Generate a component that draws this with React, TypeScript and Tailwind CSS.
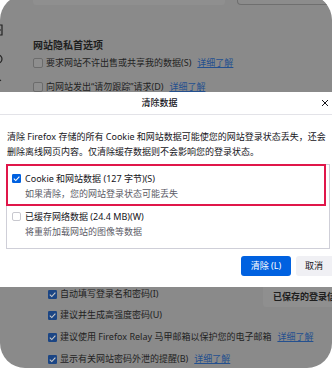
import type { ReactNode } from 'react'

const font = { fontFamily: '"Noto Sans", "Noto Sans CJK SC", sans-serif' }

function Check({ size = 9, dim = false }: { size?: number; dim?: boolean }) {
  return (
    <svg width={size} height={size} viewBox="0 0 10 10" className="shrink-0">
      <rect x="0" y="0" width="10" height="10" rx="1.5" fill={dim ? '#1b4584' : '#0061e0'} />
      <path d="M2 5.2 L4.2 7.3 L8.2 2.8" fill="none" stroke={dim ? '#c9c9c9' : '#fff'} strokeWidth="1.2" />
    </svg>
  )
}

function Empty({ dim = false }: { dim?: boolean }) {
  return (
    <span
      className={
        dim
          ? 'h-[10px] w-[10px] shrink-0 rounded-[2px] border border-[#6c6c6c] bg-[#8e8e8e]'
          : 'h-[9px] w-[9px] shrink-0 rounded-[2px] border border-[#c8c8cf] bg-white'
      }
    />
  )
}

function Link({ children }: { children: ReactNode }) {
  return <span className="ml-[6px] text-[#24508f] underline">{children}</span>
}

function PageRow({ children, checked }: { children: ReactNode; checked?: boolean }) {
  return (
    <div className="flex h-[14px] items-center gap-[3px] text-[9px] leading-[14px] text-[#222]">
      {checked ? <Check size={9} dim /> : <Empty dim />}
      <span className="whitespace-nowrap">{children}</span>
    </div>
  )
}

function Option({
  title,
  note,
  checked,
}: {
  title: string
  note: string
  checked?: boolean
}) {
  return (
    <div className="flex gap-[4px]">
      <div className="flex h-[15px] items-center">{checked ? <Check /> : <Empty />}</div>
      <div className="text-[9px] leading-[15px] whitespace-nowrap">
        <div className="text-[#15141a]">{title}</div>
        <div className="text-[#5b5b66]">{note}</div>
      </div>
    </div>
  )
}

export default function App() {
  return (
    <div className="h-[368px] w-[332px] overflow-hidden bg-white" style={font}>
      <div className="-mt-[5px] flex h-[373px] flex-col overflow-hidden rounded-[25px] bg-[#8a8a8a]">
        {/* page behind the dialog */}
        <div className="flex h-[97px] shrink-0 overflow-hidden">
          <div className="flex w-[33px] shrink-0 flex-col">
            <svg width="10" height="12" viewBox="0 0 10 12" className="mt-[29px] -ml-[6px]">
              <path d="M1 1 H8 V11 H1" fill="none" stroke="#222" strokeWidth="1.2" />
              <path d="M1 6 H7" stroke="#222" strokeWidth="1.2" />
            </svg>
            <svg width="10" height="10" viewBox="0 0 10 10" className="mt-[18px] -ml-[6px]">
              <circle cx="4" cy="5" r="4" fill="none" stroke="#222" strokeWidth="1.2" />
            </svg>
            <svg width="10" height="6" viewBox="0 0 10 6" className="mt-[15px] -ml-[7px]">
              <path d="M1 5 L8 1" stroke="#222" strokeWidth="1.2" />
            </svg>
          </div>
          <div className="flex flex-1 flex-col">
            <div className="flex h-[10px] gap-[12px]">
              <div className="relative h-[10px] w-[192px] rounded-b-[3px] bg-[#8f8f8f]">
                <div className="ml-[17px] mt-[4px] h-[1px] w-[90px] bg-[#2f5c9e]" />
              </div>
              <div className="h-[10px] flex-1 rounded-bl-[4px] border border-t-0 border-[#6f6f6f] bg-[#8c8c8c]" />
            </div>
            <div className="mt-[33px] text-[10px] font-bold leading-[14px] text-[#1e1e1e]">网站隐私首选项</div>
            <div className="mt-[4px]">
              <PageRow>
                要求网站不许出售或共享我的数据(S)<Link>详细了解</Link>
              </PageRow>
            </div>
            <div className="mt-[10px]">
              <PageRow>
                向网站发出“请勿跟踪”请求(D)<Link>详细了解</Link>
              </PageRow>
            </div>
          </div>
        </div>

        {/* dialog */}
        <div className="flex h-[195px] shrink-0 flex-col overflow-hidden bg-white">
          <div className="flex h-[23px] shrink-0 items-center border-b border-[#e3e3e8]">
            <div className="flex-1 text-center text-[9px] font-medium text-[#15141a]">清除数据</div>
            <div className="w-[13px] shrink-0">
              <svg width="8" height="8" viewBox="0 0 8 8" className="ml-[2px]">
                <path d="M1 1 L7 7 M7 1 L1 7" stroke="#15141a" strokeWidth="1" />
              </svg>
            </div>
          </div>
          <div className="pl-[7px] pr-[2px] pt-[14px] text-[9px] leading-[15px] text-[#15141a]">
            清除 Firefox 存储的所有 Cookie 和网站数据可能使您的网站登录状态丢失，还会删除离线网页内容。仅清除缓存数据则不会影响您的登录状态。
          </div>
          <div className="ml-[6px] mr-[2px] mt-[5px] h-[85px] border border-[#cfcfd8]">
            <div className="-ml-px -mt-px mr-[3px] h-[42px] border-2 border-[#e0164a] pl-[4px] pt-[5px]">
              <Option title="Cookie 和网站数据 (127 字节)(S)" note="如果清除，您的网站登录状态可能丢失" checked />
            </div>
            <div className="pl-[5px] pt-[3px]">
              <Option title="已缓存网络数据 (24.4 MB)(W)" note="将重新加载网站的图像等数据" />
            </div>
          </div>
          <div className="mt-[7px] flex justify-end gap-[5px]">
            <div className="flex h-[20px] w-[50px] items-center justify-center rounded-[3px] bg-[#0061e0] text-[9px] text-white">
              清除 (L)
            </div>
            <div className="flex h-[20px] w-[36px] items-center justify-center rounded-l-[3px] bg-[#f0f0f4] text-[9px] text-[#15141a]">
              取消
            </div>
          </div>
        </div>

        {/* page below the dialog */}
        <div className="flex flex-1 flex-col">
          <div className="flex items-start">
            <div className="ml-[48px] mt-[0px]">
              <PageRow checked>自动填写登录名和密码(I)</PageRow>
            </div>
            <div className="ml-auto flex h-[20px] w-[69px] items-center rounded-bl-[3px] bg-[#8f8f8f] pl-[10px] text-[9px] font-bold whitespace-nowrap text-[#1e1e1e]">
              已保存的登录信息
            </div>
          </div>
          <div className="ml-[48px] mt-[1px] flex flex-col gap-[8px]">
            <PageRow checked>建议并生成高强度密码(U)</PageRow>
            <PageRow checked>
              建议使用 Firefox Relay 马甲邮箱以保护您的电子邮箱<Link>详细了解</Link>
            </PageRow>
            <PageRow checked>
              显示有关网站密码外泄的提醒(B)<Link>详细了解</Link>
            </PageRow>
          </div>
        </div>
      </div>
    </div>
  )
}
